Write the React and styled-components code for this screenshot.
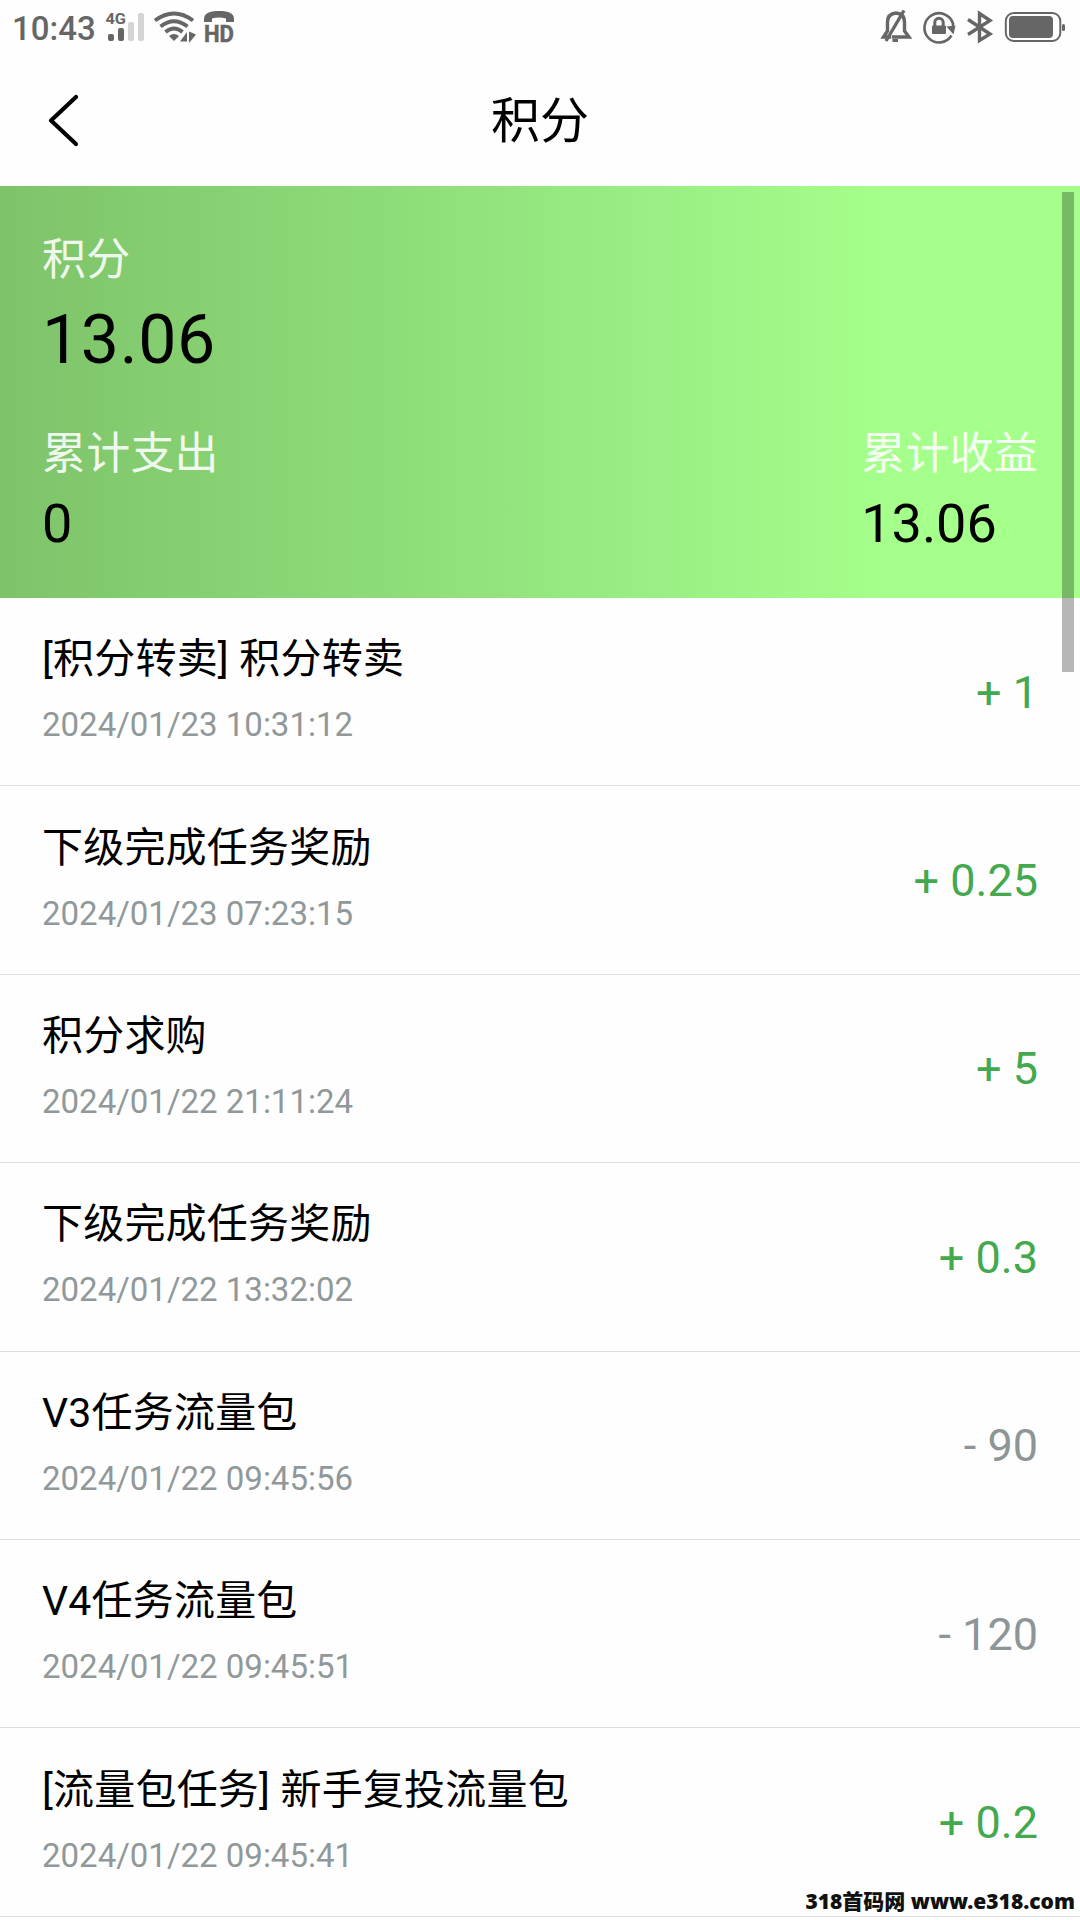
import styled, { createGlobalStyle } from "styled-components";

const GlobalStyle = createGlobalStyle`
  * {
    box-sizing: border-box;
  }
  body {
    margin: 0;
    background: #fff;
    color: #000;
    font-family: Roboto, "Noto Sans CJK SC", sans-serif;
  }
`;

const Screen = styled.div`
  position: relative;
  width: 1080px;
  height: 1920px;
  overflow: hidden;
  background: #fefefe;
`;

const StatusBar = styled.div`
  display: flex;
  align-items: center;
  justify-content: space-between;
  height: 54px;
  padding: 0 14px 0 12px;
  color: #666;
`;

const StatusGroup = styled.div`
  display: flex;
  align-items: center;
`;

const Time = styled.span`
  width: 93px;
  font-size: 33px;
  font-weight: 500;
  line-height: 54px;
  padding-top: 4px;
`;

const StatusIcon = styled.svg`
  display: block;
  height: 54px;
  width: ${(props) => props.$width}px;
  margin-left: ${(props) => props.$gap || 0}px;
  font-family: Roboto, sans-serif;
  font-weight: 700;
  overflow: visible;
`;

const NavBar = styled.header`
  display: grid;
  grid-template-columns: 120px 1fr 120px;
  align-items: center;
  height: 132px;
`;

const BackButton = styled.button`
  display: flex;
  padding: 0 0 0 46px;
  border: 0;
  background: none;
`;

const Title = styled.h1`
  margin: 0;
  padding-top: 3px;
  text-align: center;
  font-size: 49px;
  font-weight: 400;
  line-height: 70px;
`;

const Summary = styled.section`
  display: flex;
  flex-direction: column;
  justify-content: space-between;
  height: 412px;
  padding: 44px 42px 34px;
  background: linear-gradient(90deg, #7ec36a 0%, #8edc79 36%, #9aee84 60%, #a5ff8b 82%);
`;

const SummaryRow = styled.div`
  display: flex;
  justify-content: space-between;
`;

const Label = styled.div`
  color: rgba(255, 255, 255, 0.9);
  font-size: 44px;
  line-height: 60px;
  letter-spacing: 0.2px;
`;

const Balance = styled.div`
  font-size: 68px;
  line-height: 100px;
  letter-spacing: 0.6px;
`;

const Total = styled.div`
  font-size: 54px;
  line-height: 80px;
`;

const Row = styled.li`
  display: flex;
  align-items: center;
  justify-content: space-between;
  height: 188.4px;
  padding: 0 42px;
  border-bottom: 1.5px solid #ddd;
`;

const List = styled.ul`
  margin: 0;
  padding: 0;
  list-style: none;
`;

const Details = styled.div`
  padding-bottom: 5px;
`;

const RowTitle = styled.div`
  font-size: 41px;
  line-height: 52px;
  letter-spacing: 0.2px;
`;

const RowDate = styled.div`
  margin-top: 20px;
  color: #909899;
  font-size: 33px;
  line-height: 40px;
`;

const Amount = styled.div`
  color: ${(props) => (props.$income ? "#43a84e" : "#8d9596")};
  font-size: 45px;
  line-height: 60px;
  padding-top: 2px;
`;

const ScrollThumb = styled.div`
  position: absolute;
  top: 192px;
  right: 6px;
  width: 12px;
  height: 480px;
  background: rgba(0, 0, 0, 0.28);
`;

const Watermark = styled.div`
  position: absolute;
  right: 5px;
  bottom: 4px;
  color: #111;
  font-family: "Noto Sans", "Noto Sans CJK SC", sans-serif;
  font-size: 21px;
  font-weight: 900;
  line-height: 30px;
  white-space: nowrap;
`;

const records = [
  { title: "[积分转卖] 积分转卖", date: "2024/01/23 10:31:12", amount: 1 },
  { title: "下级完成任务奖励", date: "2024/01/23 07:23:15", amount: 0.25 },
  { title: "积分求购", date: "2024/01/22 21:11:24", amount: 5 },
  { title: "下级完成任务奖励", date: "2024/01/22 13:32:02", amount: 0.3 },
  { title: "V3任务流量包", date: "2024/01/22 09:45:56", amount: -90 },
  { title: "V4任务流量包", date: "2024/01/22 09:45:51", amount: -120 },
  { title: "[流量包任务] 新手复投流量包", date: "2024/01/22 09:45:41", amount: 0.2 },
];

const formatAmount = (value) => `${value < 0 ? "-" : "+"} ${Math.abs(value)}`;

const SignalIcon = () => (
  <StatusIcon $width={41} viewBox="105 0 41 54" fill="#666">
    <text x="105.5" y="24" fontSize="15.5" textLength="20.5" lengthAdjust="spacingAndGlyphs">4G</text>
    <rect x="108" y="34" width="6" height="7" rx="2" />
    <rect x="118" y="28" width="6" height="13" rx="2" />
    <rect x="128" y="22" width="6" height="19" rx="2" fill="#d4d4d4" />
    <rect x="138" y="13" width="6" height="28" rx="2" fill="#d4d4d4" />
  </StatusIcon>
);

const WifiIcon = () => (
  <StatusIcon $width={44} $gap={7} viewBox="153 0 44 54" fill="none" stroke="#666" strokeWidth="3.8">
    <path d="M155 20.5Q174 6.5 193 20.5" />
    <path d="M160.5 26.5Q174 16 187.5 26.5" />
    <path d="M165.5 32Q174 25 182.5 32" />
    <path d="M169 36Q174 32 179 36L174 41Z" fill="#666" stroke="none" />
    <path d="M180 41.5L187 32V41.5ZM189 31.5L196 34.5L189 43Z" fill="#666" stroke="none" />
  </StatusIcon>
);

const HdCallIcon = () => (
  <StatusIcon $width={36} $gap={5} viewBox="202 0 36 54" fill="#666">
    <path d="M204 22V19C204 13.5 209 11 219 11S234 13.5 234 19V22H226V18.5Q219 16.5 212 18.5V22Z" />
    <text x="204" y="41.8" fontSize="23.5" textLength="30" lengthAdjust="spacingAndGlyphs" stroke="#666" strokeWidth="0.5">HD</text>
  </StatusIcon>
);

const MutedIcon = () => (
  <StatusIcon $width={32} viewBox="880 0 32 54" fill="none" stroke="#666" strokeWidth="3.4">
    <path d="M889.5 34.5V37H883.5L887.5 31V22Q887.5 14 896 13Q904.5 14 904.5 22V31L909 37H892" />
    <path d="M904 10.5L886 41" />
    <path d="M892.5 40.5H898" strokeWidth="3" />
  </StatusIcon>
);

const RotationLockIcon = () => (
  <StatusIcon $width={33} $gap={11} viewBox="923 0 33 54" fill="none" stroke="#666" strokeWidth="2.6">
    <path d="M951.5 35.5A14.6 14.6 0 1 1 953 23.5V28" />
    <path d="M946.5 26.5L955.5 25.5L953.5 34.5Z" fill="#666" stroke="none" />
    <rect x="932" y="25.5" width="14" height="8.5" rx="1" fill="#666" stroke="none" />
    <path d="M934.8 27V22.5A4.2 4.2 0 0 1 943.2 22.5V27" strokeWidth="3" />
  </StatusIcon>
);

const BluetoothIcon = () => (
  <StatusIcon $width={26} $gap={11} viewBox="967 0 26 54" fill="none" stroke="#666" strokeWidth="3.4">
    <path d="M968 19.5L990 34L979.5 40.5V13.5L990 20.5L968 34.5" />
  </StatusIcon>
);

const BatteryIcon = () => (
  <StatusIcon $width={62} $gap={11} viewBox="1004 0 62 54" fill="#666">
    <rect x="1005.8" y="13" width="54.5" height="28" rx="8" fill="none" stroke="#666" strokeWidth="2" />
    <rect x="1009" y="16" width="44" height="22" rx="4" />
    <rect x="1062" y="24" width="3" height="7" rx="1.5" />
  </StatusIcon>
);

const App = () => {
  return (
    <Screen>
      <GlobalStyle />
      <StatusBar>
        <StatusGroup>
          <Time>10:43</Time>
          <SignalIcon />
          <WifiIcon />
          <HdCallIcon />
        </StatusGroup>
        <StatusGroup>
          <MutedIcon />
          <RotationLockIcon />
          <BluetoothIcon />
          <BatteryIcon />
        </StatusGroup>
      </StatusBar>
      <NavBar>
        <BackButton aria-label="返回">
          <svg width="34" height="54" viewBox="0 0 34 54" fill="none" stroke="#000" strokeWidth="4.2" strokeLinecap="round" strokeLinejoin="round">
            <path d="M30 4L5 27.5L30 51" />
          </svg>
        </BackButton>
        <Title>积分</Title>
      </NavBar>
      <Summary>
        <div>
          <Label>积分</Label>
          <Balance>13.06</Balance>
        </div>
        <SummaryRow>
          <div>
            <Label>累计支出</Label>
            <Total>0</Total>
          </div>
          <div>
            <Label>累计收益</Label>
            <Total>13.06</Total>
          </div>
        </SummaryRow>
      </Summary>
      <List>
        {records.map((record) => (
          <Row key={record.date}>
            <Details>
              <RowTitle>{record.title}</RowTitle>
              <RowDate>{record.date}</RowDate>
            </Details>
            <Amount $income={record.amount > 0}>{formatAmount(record.amount)}</Amount>
          </Row>
        ))}
      </List>
      <ScrollThumb />
      <Watermark>318首码网 www.e318.com</Watermark>
    </Screen>
  );
};

export default App;
